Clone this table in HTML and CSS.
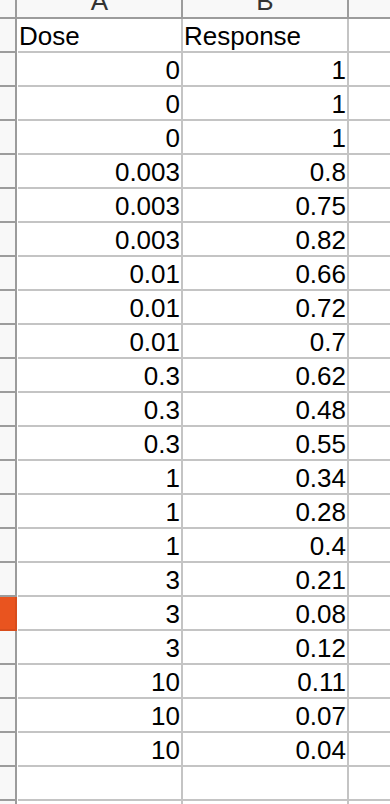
FILE: index.html
```html
<!DOCTYPE html>
<html>
<head>
<meta charset="utf-8">
<link rel="stylesheet" href="styles.css">
</head>
<body>
<div class="sheet">
  <div class="colheads">
    <div class="corner"></div>
    <div class="gap"></div>
    <div class="colhead col-a"><div class="letter">A</div></div>
    <div class="colhead col-b"><div class="letter">B</div></div>
    <div class="colhead col-c"></div>
  </div>
  <div class="row"><div class="rh"></div><div class="gap"></div><div class="cell col-a text">Dose</div><div class="cell col-b text">Response</div><div class="cell col-c"></div></div>
  <div class="row"><div class="rh"></div><div class="gap"></div><div class="cell col-a">0</div><div class="cell col-b">1</div><div class="cell col-c"></div></div>
  <div class="row"><div class="rh"></div><div class="gap"></div><div class="cell col-a">0</div><div class="cell col-b">1</div><div class="cell col-c"></div></div>
  <div class="row"><div class="rh"></div><div class="gap"></div><div class="cell col-a">0</div><div class="cell col-b">1</div><div class="cell col-c"></div></div>
  <div class="row"><div class="rh"></div><div class="gap"></div><div class="cell col-a">0.003</div><div class="cell col-b">0.8</div><div class="cell col-c"></div></div>
  <div class="row"><div class="rh"></div><div class="gap"></div><div class="cell col-a">0.003</div><div class="cell col-b">0.75</div><div class="cell col-c"></div></div>
  <div class="row"><div class="rh"></div><div class="gap"></div><div class="cell col-a">0.003</div><div class="cell col-b">0.82</div><div class="cell col-c"></div></div>
  <div class="row"><div class="rh"></div><div class="gap"></div><div class="cell col-a">0.01</div><div class="cell col-b">0.66</div><div class="cell col-c"></div></div>
  <div class="row"><div class="rh"></div><div class="gap"></div><div class="cell col-a">0.01</div><div class="cell col-b">0.72</div><div class="cell col-c"></div></div>
  <div class="row"><div class="rh"></div><div class="gap"></div><div class="cell col-a">0.01</div><div class="cell col-b">0.7</div><div class="cell col-c"></div></div>
  <div class="row"><div class="rh"></div><div class="gap"></div><div class="cell col-a">0.3</div><div class="cell col-b">0.62</div><div class="cell col-c"></div></div>
  <div class="row"><div class="rh"></div><div class="gap"></div><div class="cell col-a">0.3</div><div class="cell col-b">0.48</div><div class="cell col-c"></div></div>
  <div class="row"><div class="rh"></div><div class="gap"></div><div class="cell col-a">0.3</div><div class="cell col-b">0.55</div><div class="cell col-c"></div></div>
  <div class="row"><div class="rh"></div><div class="gap"></div><div class="cell col-a">1</div><div class="cell col-b">0.34</div><div class="cell col-c"></div></div>
  <div class="row"><div class="rh"></div><div class="gap"></div><div class="cell col-a">1</div><div class="cell col-b">0.28</div><div class="cell col-c"></div></div>
  <div class="row"><div class="rh"></div><div class="gap"></div><div class="cell col-a">1</div><div class="cell col-b">0.4</div><div class="cell col-c"></div></div>
  <div class="row"><div class="rh"></div><div class="gap"></div><div class="cell col-a">3</div><div class="cell col-b">0.21</div><div class="cell col-c"></div></div>
  <div class="row"><div class="rh selected"></div><div class="gap"></div><div class="cell col-a">3</div><div class="cell col-b">0.08</div><div class="cell col-c"></div></div>
  <div class="row"><div class="rh"></div><div class="gap"></div><div class="cell col-a">3</div><div class="cell col-b">0.12</div><div class="cell col-c"></div></div>
  <div class="row"><div class="rh"></div><div class="gap"></div><div class="cell col-a">10</div><div class="cell col-b">0.11</div><div class="cell col-c"></div></div>
  <div class="row"><div class="rh"></div><div class="gap"></div><div class="cell col-a">10</div><div class="cell col-b">0.07</div><div class="cell col-c"></div></div>
  <div class="row"><div class="rh"></div><div class="gap"></div><div class="cell col-a">10</div><div class="cell col-b">0.04</div><div class="cell col-c"></div></div>
  <div class="row"><div class="rh"></div><div class="gap"></div><div class="cell col-a"></div><div class="cell col-b"></div><div class="cell col-c"></div></div>
  <div class="row"><div class="rh"></div><div class="gap"></div><div class="cell col-a"></div><div class="cell col-b"></div><div class="cell col-c"></div></div>
</div>
</body>
</html>
```
FILE: styles.css
```css
html, body {
  margin: 0;
  padding: 0;
  background: #ffffff;
}
body {
  width: 390px;
  height: 804px;
  overflow: hidden;
  font-family: "Liberation Sans", Arial, sans-serif;
  font-size: 26px;
  color: #000000;
}
.sheet {
  display: flex;
  flex-direction: column;
}
.colheads {
  display: flex;
  height: 17px;
  background: #f8f8f8;
  border-bottom: 2px solid #9c9c9c;
  overflow: hidden;
}
.corner {
  width: 15px;
  flex: none;
  border-right: 2px solid #9c9c9c;
}
.gap {
  width: 1px;
  flex: none;
}
.colhead {
  flex: none;
  border-right: 2px solid #9c9c9c;
  overflow: hidden;
  text-align: center;
  color: #333333;
}
.letter {
  line-height: 28px;
  margin-top: -13px;
}
.col-a { width: 163px; }
.col-b { width: 164px; }
.col-c { flex: 1; width: auto; border-right: none; }
.row {
  display: flex;
  height: 34px;
  flex: none;
}
.rh {
  width: 15px;
  flex: none;
  background: #f8f8f8;
  border-right: 2px solid #9c9c9c;
  border-bottom: 2px solid #9c9c9c;
}
.rh.selected {
  background: #e9541f;
  border-right-color: #d84d1c;
  border-bottom-color: #d84d1c;
}
.row .gap {
  border-bottom: 2px solid #ffffff;
}
.cell {
  flex: none;
  height: 31px;
  padding-bottom: 1px;
  border-right: 2px solid #c4c4c4;
  border-bottom: 2px solid #c4c4c4;
  display: flex;
  align-items: flex-end;
  justify-content: flex-end;
  line-height: 28px;
  padding-right: 1px;
  box-sizing: content-box;
  white-space: nowrap;
}
.cell.col-a { width: 162px; }
.cell.col-b { width: 163px; }
.cell.col-c { flex: 1; border-right: none; }
.cell.text {
  justify-content: flex-start;
  padding-left: 1px;
  padding-right: 0;
}
```
